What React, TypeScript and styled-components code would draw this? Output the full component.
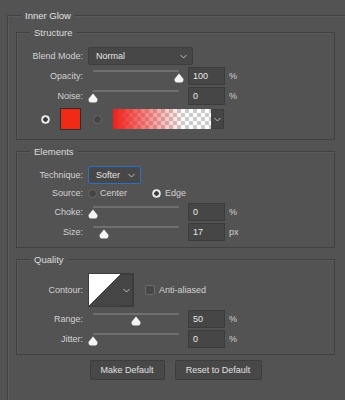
import React from 'react';
import styled, { createGlobalStyle } from 'styled-components';

const GlobalStyle = createGlobalStyle`
  html, body {
    margin: 0;
    padding: 0;
    background: #535353;
    overflow: hidden;
  }
  body {
    width: 345px;
    height: 400px;
    font-family: "Liberation Sans", Arial, sans-serif;
    font-size: 9px;
    color: #d2d2d2;
  }
`;

const Page = styled.div`
  padding: 15px 0 0 7px;
  width: 345px;
  height: 400px;
  box-sizing: border-box;
`;

const Group = styled.div<{ $outer?: boolean }>`
  position: relative;
  border: 1px solid #414141;
  border-bottom: ${({ $outer }) => ($outer ? 'none' : '1px solid #414141')};
  box-shadow: inset 1px 1px 0 #5a5a5a;
  width: ${({ $outer }) => ($outer ? '340px' : '317px')};
  height: ${({ $outer }) => ($outer ? '400px' : 'auto')};
  box-sizing: ${({ $outer }) => ($outer ? 'border-box' : 'content-box')};
  padding: ${({ $outer }) => ($outer ? '16px 0 0 8px' : '0')};
`;

const Legend = styled.span<{ $bright?: boolean }>`
  position: absolute;
  top: -7px;
  left: 13px;
  padding: 0 4px;
  line-height: 13px;
  background: #535353;
  color: ${({ $bright }) => ($bright ? '#e2e2e2' : '#dcdcdc')};
  font-size: 9.5px;
`;

const Body = styled.div<{ $top: number; $bottom: number }>`
  display: flex;
  flex-direction: column;
  padding: ${({ $top, $bottom }) => `${$top}px 0 ${$bottom}px 0`};
`;

const Stack = styled.div`
  display: flex;
  flex-direction: column;
  gap: 11px;
`;

const Row = styled.div<{ $h?: number; $mt?: number }>`
  display: flex;
  align-items: center;
  height: ${({ $h }) => $h ?? 20}px;
  margin-top: ${({ $mt }) => $mt ?? 0}px;
`;

const Label = styled.div`
  width: 66px;
  text-align: right;
  margin-right: 5px;
  white-space: nowrap;
`;

const Select = styled.div<{ $w: number; $focus?: boolean }>`
  width: ${({ $w }) => $w}px;
  height: 18px;
  box-sizing: border-box;
  border: 1px solid ${({ $focus }) => ($focus ? '#2d6fc0' : '#3e3e3e')};
  border-radius: 2px;
  background: #474747;
  display: flex;
  align-items: center;
  justify-content: space-between;
  padding: 0 5px 0 7px;
  color: #e4e4e4;
`;

const Chevron = () => (
  <svg width="7" height="5" viewBox="0 0 7 5">
    <path d="M0.5 1 L3.5 4 L6.5 1" fill="none" stroke="#bdbdbd" strokeWidth="1" />
  </svg>
);

const SliderBox = styled.div`
  position: relative;
  width: 96px;
  height: 20px;
  margin-right: 4px;
`;

const Track = styled.div`
  margin: 4px 5px 0 5px;
  height: 2px;
  background: #6f6f6f;
`;

const ThumbWrap = styled.div`
  position: absolute;
  top: 7px;
  width: 10px;
  height: 10px;
`;

const Slider = ({ frac }: { frac: number }) => (
  <SliderBox>
    <Track />
    <ThumbWrap style={{ left: `${Math.round(frac * 86)}px` }}>
      <svg width="10" height="10" viewBox="0 0 10 10">
        <path d="M5 0.5 L9.5 6 Q9.5 9.5 7 9.5 L3 9.5 Q0.5 9.5 0.5 6 Z" fill="#f4f4f4" />
      </svg>
    </ThumbWrap>
  </SliderBox>
);

const NumBox = styled.div`
  width: 37px;
  height: 18px;
  box-sizing: border-box;
  border: 1px solid #3c3c3c;
  background: #464646;
  color: #e6e6e6;
  display: flex;
  align-items: center;
  padding-left: 4px;
  margin-right: 4px;
`;

const Unit = styled.span`
  color: #d2d2d2;
`;

const Radio = styled.span<{ $on?: boolean; $ml?: number; $mr?: number }>`
  display: inline-block;
  width: 9px;
  height: 9px;
  border-radius: 50%;
  box-sizing: border-box;
  margin-left: ${({ $ml }) => $ml ?? 0}px;
  margin-right: ${({ $mr }) => $mr ?? 0}px;
  background: ${({ $on }) =>
    $on ? 'radial-gradient(circle, #3c3c3c 0 2px, #e8e8e8 2.5px)' : '#444'};
  border: 1px solid ${({ $on }) => ($on ? '#e8e8e8' : '#6a6a6a')};
`;

const Swatch = styled.div`
  width: 21px;
  height: 22px;
  box-sizing: border-box;
  border: 1px solid #2e2e2e;
  background: #f02a17;
  margin-right: 12px;
`;

const GradientPick = styled.div`
  display: flex;
  height: 20px;
`;

const GradientBar = styled.div`
  width: 98px;
  height: 20px;
  background:
    linear-gradient(to right, rgba(240, 30, 25, 1) 0%, rgba(240, 30, 25, 0) 72%),
    repeating-conic-gradient(#ffffff 0 25%, #cccccc 0 50%) 0 0 / 8px 8px;
`;

const DropTab = styled.div<{ $h: number }>`
  width: 13px;
  height: ${({ $h }) => $h}px;
  box-sizing: border-box;
  background: #454545;
  border: 1px solid #3c3c3c;
  border-left: none;
  display: flex;
  align-items: center;
  justify-content: center;
`;

const Contour = styled.div`
  display: flex;
  height: 32px;
  margin-right: 11px;
  border: 1px solid #3c3c3c;
`;

const ContourCurve = styled.div`
  width: 31px;
  height: 32px;
  background: linear-gradient(to bottom right, #ffffff 50%, #454545 50%);
`;

const Check = styled.span`
  display: inline-block;
  width: 10px;
  height: 10px;
  box-sizing: border-box;
  border: 1px solid #6c6c6c;
  border-radius: 2px;
  background: #474747;
  margin-right: 4px;
`;

const Buttons = styled.div`
  display: flex;
  justify-content: center;
  gap: 10px;
  width: 319px;
  margin-top: 5px;
`;

const Button = styled.div<{ $w: number }>`
  width: ${({ $w }) => $w}px;
  height: 20px;
  box-sizing: border-box;
  border: 1px solid #3d3d3d;
  border-radius: 2px;
  background: #484848;
  color: #e0e0e0;
  display: flex;
  align-items: center;
  justify-content: center;
`;

const Text = styled.span<{ $mr?: number }>`
  margin-right: ${({ $mr }) => $mr ?? 0}px;
`;

const SliderRow = ({ label, frac, value, unit }: { label: string; frac: number; value: string; unit: string }) => (
  <Row>
    <Label>{label}</Label>
    <Slider frac={frac} />
    <NumBox>{value}</NumBox>
    <Unit>{unit}</Unit>
  </Row>
);

const App: React.FC = () => (
  <>
    <GlobalStyle />
    <Page>
      <Group $outer>
        <Legend $bright>Inner Glow</Legend>
        <Stack>
          <Group>
            <Legend>Structure</Legend>
            <Body $top={13} $bottom={9}>
              <Row>
                <Label>Blend Mode:</Label>
                <Select $w={105}>
                  <span>Normal</span>
                  <Chevron />
                </Select>
              </Row>
              <SliderRow label="Opacity:" frac={1} value="100" unit="%" />
              <SliderRow label="Noise:" frac={0} value="0" unit="%" />
              <Row $h={22} $mt={2}>
                <Radio $on $ml={24} $mr={10} />
                <Swatch />
                <Radio $mr={11} />
                <GradientPick>
                  <GradientBar />
                  <DropTab $h={20}>
                    <Chevron />
                  </DropTab>
                </GradientPick>
              </Row>
            </Body>
          </Group>

          <Group>
            <Legend>Elements</Legend>
            <Body $top={14} $bottom={5}>
              <Row $h={18}>
                <Label>Technique:</Label>
                <Select $w={53} $focus>
                  <span>Softer</span>
                  <Chevron />
                </Select>
              </Row>
              <Row $h={18}>
                <Label>Source:</Label>
                <Radio $mr={3} />
                <Text $mr={25}>Center</Text>
                <Radio $on $mr={4} />
                <Text>Edge</Text>
              </Row>
              <SliderRow label="Choke:" frac={0} value="0" unit="%" />
              <SliderRow label="Size:" frac={0.128} value="17" unit="px" />
            </Body>
          </Group>

          <Group>
            <Legend>Quality</Legend>
            <Body $top={14} $bottom={5}>
              <Row $h={32}>
                <Label>Contour:</Label>
                <Contour>
                  <ContourCurve />
                  <DropTab $h={32}>
                    <Chevron />
                  </DropTab>
                </Contour>
                <Check />
                <Text>Anti-aliased</Text>
              </Row>
              <Row $mt={3}>
                <Label>Range:</Label>
                <Slider frac={0.5} />
                <NumBox>50</NumBox>
                <Unit>%</Unit>
              </Row>
              <SliderRow label="Jitter:" frac={0} value="0" unit="%" />
            </Body>
          </Group>
        </Stack>
        <Buttons>
          <Button $w={75}>Make Default</Button>
          <Button $w={87}>Reset to Default</Button>
        </Buttons>
      </Group>
    </Page>
  </>
);

export default App;
